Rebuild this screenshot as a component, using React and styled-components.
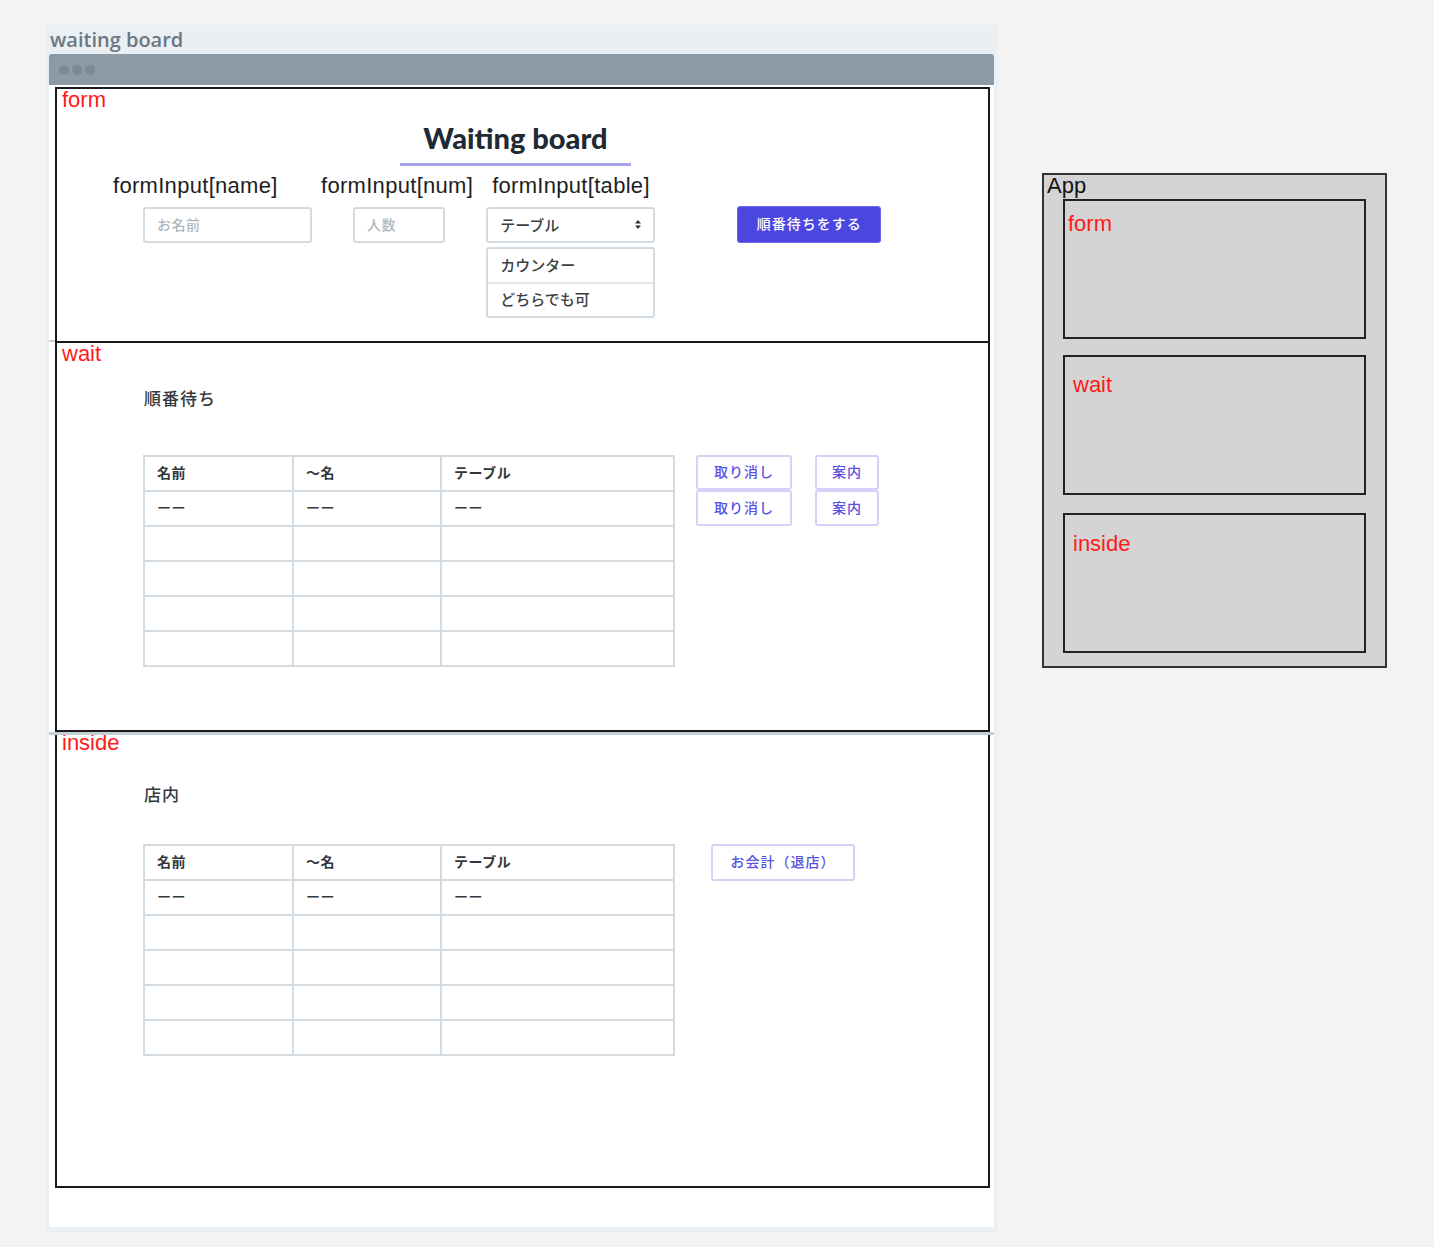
import React from "react";
import styled, { createGlobalStyle } from "styled-components";

const GlobalStyle = createGlobalStyle`
  html, body { margin: 0; padding: 0; background: #f3f3f3; }
  body { font-family: "Liberation Sans", Arial, sans-serif; }
  * { box-sizing: border-box; }
`;

const JP = `"Noto Sans CJK JP", "Noto Sans", sans-serif`;

const Page = styled.div`
  display: flex;
  align-items: flex-start;
  padding: 25px 0 0 46px;
  gap: 44px;
  min-height: 1247px;
`;

const Frame = styled.div`
  width: 952px;
  background: #eaeff3;
  padding: 0 4px 5px 3px;
`;

const FrameTitle = styled.div`
  font-family: "Open Sans", Lato, sans-serif;
  font-weight: 600;
  font-size: 20px;
  line-height: 29px;
  color: #6b7782;
  padding-left: 1px;
`;

const WindowBar = styled.div`
  height: 31px;
  background: #8a9ba6;
  border-radius: 3px 3px 0 0;
  display: flex;
  align-items: center;
  gap: 3px;
  padding-left: 10px;
`;

const Dot = styled.span`
  width: 10px;
  height: 10px;
  border-radius: 50%;
  background: #7b8a95;
`;

const Content = styled.div`
  background: #fff;
  padding: 2px 4px 39px 6px;
`;

const Section = styled.section`
  position: relative;
  border: 2px solid #1a1a1a;
  height: ${(p) => p.$h}px;
  margin-top: ${(p) => (p.$first ? 0 : -2)}px;
  background: #fff;
`;

const TopRule = styled.div`
  position: absolute;
  top: ${(p) => p.$top}px;
  left: -8px;
  right: ${(p) => (p.$full ? "-6px" : "auto")};
  width: ${(p) => (p.$full ? "auto" : "6px")};
  height: ${(p) => p.$hgt}px;
  background: #c5ced5;
`;

const SectionLabel = styled.div`
  color: #ff1a1a;
  font-size: 22px;
  line-height: 22px;
  padding-left: 5px;
`;

const HeadingWrap = styled.div`
  display: flex;
  justify-content: center;
  padding-right: 14px;
  margin-top: 10px;
`;

const Heading = styled.h1`
  margin: 0;
  width: 231px;
  text-align: center;
  font-family: Lato, "Open Sans", sans-serif;
  font-weight: 900;
  font-size: 29px;
  line-height: 34px;
  color: #1f2a33;
  padding-bottom: 8px;
  border-bottom: 3px solid #a7a2f0;
`;

const FieldsRow = styled.div`
  display: flex;
  align-items: flex-start;
  padding-left: 56px;
  margin-top: 8px;
`;

const Field = styled.div`
  display: flex;
  flex-direction: column;
  align-items: flex-start;
  margin-left: ${(p) => p.$ml || 0}px;
`;

const FieldLabel = styled.div`
  font-size: 22px;
  line-height: 24px;
  letter-spacing: 0.3px;
  color: #1e1e1e;
  margin-left: ${(p) => p.$ml || 0}px;
  white-space: nowrap;
`;

const TextInput = styled.div`
  margin-top: 9px;
  margin-left: ${(p) => p.$ml || 0}px;
  width: ${(p) => p.$w}px;
  height: 36px;
  border: 2px solid #d3dbe2;
  border-radius: 3px;
  display: flex;
  align-items: center;
  padding: 0 0 3px 12px;
  font-family: ${JP};
  font-weight: 500;
  font-size: 14px;
  color: #aeb8c1;
  letter-spacing: 0.5px;
`;

const Select = styled.div`
  margin-top: 9px;
  width: 169px;
  height: 36px;
  border: 2px solid #d3dbe2;
  border-radius: 3px;
  display: flex;
  align-items: center;
  justify-content: space-between;
  padding: 0 12px 2px 12px;
  font-family: ${JP};
  font-weight: 500;
  font-size: 15px;
  color: #3a3f44;
`;

const OptionList = styled.div`
  margin-top: 4px;
  width: 169px;
  border: 2px solid #d3dbe2;
  border-radius: 3px;
  display: flex;
  flex-direction: column;
`;

const Option = styled.div`
  height: ${(p) => (p.$last ? 34 : 33)}px;
  display: flex;
  align-items: center;
  padding: 0 0 3px 12px;
  font-family: ${JP};
  font-weight: 500;
  font-size: 15px;
  color: #3a3f44;
  border-top: ${(p) => (p.$last ? "2px solid #e3e8ec" : "none")};
`;

const PrimaryButton = styled.button`
  margin: 32px 0 0 82px;
  width: 144px;
  height: 37px;
  border: 1px solid #6a66ee;
  border-radius: 3px;
  background: #4b46e0;
  color: #fff;
  font-family: ${JP};
  font-weight: 500;
  font-size: 14px;
  letter-spacing: 1px;
  padding: 0 0 3px;
  cursor: pointer;
`;

const SubTitle = styled.div`
  margin-top: ${(p) => p.$mt}px;
  padding-left: 87px;
  font-family: ${JP};
  font-weight: 500;
  font-size: 17px;
  line-height: 24px;
  letter-spacing: 1px;
  color: #34393e;
`;

const BoardRow = styled.div`
  display: flex;
  align-items: flex-start;
  padding-left: 86px;
  margin-top: ${(p) => p.$mt}px;
`;

const Table = styled.table`
  border-collapse: collapse;
  table-layout: fixed;
  width: 530px;
`;

const Cell = styled.td`
  border: 2px solid #d3dae0;
  height: 35px;
  padding: 0 0 3px 12px;
  font-family: ${JP};
  font-size: 14px;
  letter-spacing: 0.5px;
  color: #33383d;
  font-weight: ${(p) => (p.$head ? 700 : 500)};
  text-align: left;
  vertical-align: middle;
`;

const ActionCols = styled.div`
  display: flex;
  margin-left: ${(p) => p.$ml}px;
  gap: 23px;
`;

const ActionCol = styled.div`
  display: flex;
  flex-direction: column;
`;

const GhostButton = styled.button`
  width: ${(p) => p.$w}px;
  height: ${(p) => p.$h || 35}px;
  background: #fff;
  border: 2px solid #d4d1fa;
  border-radius: 3px;
  color: #5752df;
  font-family: ${JP};
  font-weight: 500;
  font-size: 14px;
  letter-spacing: 1px;
  padding: 0 0 3px;
  cursor: pointer;
`;

const AppBox = styled.div`
  margin-top: 148px;
  width: 345px;
  height: 495px;
  background: #d4d4d4;
  border: 2px solid #333;
  display: flex;
  flex-direction: column;
`;

const AppLabel = styled.div`
  font-size: 22px;
  line-height: 22px;
  color: #111;
  padding-left: 3px;
  height: 24px;
`;

const MiniBox = styled.div`
  margin: ${(p) => p.$mt}px 0 0 19px;
  width: 303px;
  height: 140px;
  border: 2px solid #222;
  background: #d4d4d4;
`;

const MiniLabel = styled.div`
  color: #ff1a1a;
  font-size: 22px;
  line-height: 22px;
  margin: ${(p) => p.$mt}px 0 0 ${(p) => p.$ml}px;
`;

const SortIcon = () => (
  <svg width="6" height="9" viewBox="0 0 6 9">
    <path d="M3 0 L6 3.5 H0 Z M3 9 L0 5.5 H6 Z" fill="#333" />
  </svg>
);

const rows = [0, 1, 2, 3, 4];

const Board = () => (
  <Table>
    <colgroup>
      <col style={{ width: 149 }} />
      <col style={{ width: 148 }} />
      <col style={{ width: 233 }} />
    </colgroup>
    <thead>
      <tr>
        <Cell as="th" $head>名前</Cell>
        <Cell as="th" $head>〜名</Cell>
        <Cell as="th" $head>テーブル</Cell>
      </tr>
    </thead>
    <tbody>
      {rows.map((i) => (
        <tr key={i}>
          <Cell>{i === 0 ? "ーー" : ""}</Cell>
          <Cell>{i === 0 ? "ーー" : ""}</Cell>
          <Cell>{i === 0 ? "ーー" : ""}</Cell>
        </tr>
      ))}
    </tbody>
  </Table>
);

export default function App() {
  return (
    <>
      <GlobalStyle />
      <Page>
        <Frame>
          <FrameTitle>waiting board</FrameTitle>
          <WindowBar>
            <Dot />
            <Dot />
            <Dot />
          </WindowBar>
          <Content>
            <Section $first $h={256}>
              <SectionLabel>form</SectionLabel>
              <HeadingWrap>
                <Heading>Waiting board</Heading>
              </HeadingWrap>
              <FieldsRow>
                <Field>
                  <FieldLabel>formInput[name]</FieldLabel>
                  <TextInput $ml={30} $w={169}>お名前</TextInput>
                </Field>
                <Field $ml={9}>
                  <FieldLabel>formInput[num]</FieldLabel>
                  <TextInput $ml={32} $w={92}>人数</TextInput>
                </Field>
                <Field $ml={13}>
                  <FieldLabel $ml={6}>formInput[table]</FieldLabel>
                  <Select>
                    <span>テーブル</span>
                    <SortIcon />
                  </Select>
                  <OptionList>
                    <Option>カウンター</Option>
                    <Option $last>どちらでも可</Option>
                  </OptionList>
                </Field>
                <PrimaryButton>順番待ちをする</PrimaryButton>
              </FieldsRow>
            </Section>
            <Section $h={391}>
              <TopRule $top={-3} $hgt={2} />
              <SectionLabel>wait</SectionLabel>
              <SubTitle $mt={21}>順番待ち</SubTitle>
              <BoardRow $mt={45}>
                <Board />
                <ActionCols $ml={21}>
                  <ActionCol>
                    <GhostButton $w={96}>取り消し</GhostButton>
                    <GhostButton $w={96} $h={36}>取り消し</GhostButton>
                  </ActionCol>
                  <ActionCol>
                    <GhostButton $w={64}>案内</GhostButton>
                    <GhostButton $w={64} $h={36}>案内</GhostButton>
                  </ActionCol>
                </ActionCols>
              </BoardRow>
            </Section>
            <Section $h={458}>
              <TopRule $full $top={0} $hgt={3} />
              <SectionLabel>inside</SectionLabel>
              <SubTitle $mt={28}>店内</SubTitle>
              <BoardRow $mt={38}>
                <Board />
                <ActionCols $ml={36}>
                  <GhostButton $w={144} $h={37}>お会計（退店）</GhostButton>
                </ActionCols>
              </BoardRow>
            </Section>
          </Content>
        </Frame>
        <AppBox>
          <AppLabel>App</AppLabel>
          <MiniBox $mt={0}>
            <MiniLabel $mt={12} $ml={3}>form</MiniLabel>
          </MiniBox>
          <MiniBox $mt={16}>
            <MiniLabel $mt={17} $ml={8}>wait</MiniLabel>
          </MiniBox>
          <MiniBox $mt={18}>
            <MiniLabel $mt={18} $ml={8}>inside</MiniLabel>
          </MiniBox>
        </AppBox>
      </Page>
    </>
  );
}
